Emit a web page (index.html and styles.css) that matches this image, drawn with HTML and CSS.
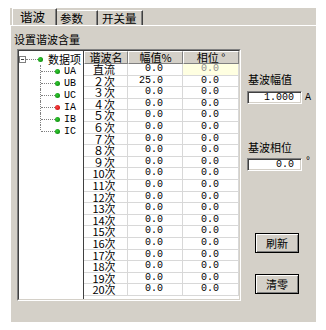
FILE: index.html
```html
<!DOCTYPE html>
<html lang="zh">
<head>
    <meta charset="UTF-8">
    <meta name="viewport" content="width=device-width, initial-scale=1.0">
    <title>谐波设置</title>
    <link rel="stylesheet" href="styles.css">
</head>
<body>
    <div class="window">
        <!-- Pestañas -->
        <div class="tabs">
            <div class="tab tab-harm active">谐波</div>
            <div class="tab tab-param">参数</div>
            <div class="tab tab-switch">开关量</div>
        </div>

        <div class="panel">
            <div class="group-title">设置谐波含量</div>

            <div class="content">
                <div class="frame">
                    <div class="frame-inner">
                        <!-- Árbol de datos -->
                        <div class="tree">
                            <div class="node root">
                                <span class="expander"></span>
                                <span class="hline short"></span>
                                <span class="dot"></span>
                                <span class="node-label">数据项</span>
                            </div>
                            <div class="children">
                                <div class="node leaf"><span class="hline"></span><span class="dot"></span><span class="node-label latin">UA</span></div>
                                <div class="node leaf"><span class="hline"></span><span class="dot"></span><span class="node-label latin">UB</span></div>
                                <div class="node leaf"><span class="hline"></span><span class="dot"></span><span class="node-label latin">UC</span></div>
                                <div class="node leaf"><span class="hline"></span><span class="dot red"></span><span class="node-label latin">IA</span></div>
                                <div class="node leaf"><span class="hline"></span><span class="dot"></span><span class="node-label latin">IB</span></div>
                                <div class="node leaf"><span class="hline"></span><span class="dot"></span><span class="node-label latin">IC</span></div>
                            </div>
                        </div>

                        <!-- Tabla de armónicos -->
                        <div class="grid">
                            <div class="grid-head">
                                <div class="th">谐波名</div>
                                <div class="th">幅值%</div>
                                <div class="th">相位 °</div>
                            </div>
                            <div class="row"><div class="td name">直流</div><div class="td num">0.0</div><div class="td num current">0.0</div></div>
                            <div class="row"><div class="td name">２次</div><div class="td num">25.0</div><div class="td num">0.0</div></div>
                            <div class="row"><div class="td name">３次</div><div class="td num">0.0</div><div class="td num">0.0</div></div>
                            <div class="row"><div class="td name">４次</div><div class="td num">0.0</div><div class="td num">0.0</div></div>
                            <div class="row"><div class="td name">５次</div><div class="td num">0.0</div><div class="td num">0.0</div></div>
                            <div class="row"><div class="td name">６次</div><div class="td num">0.0</div><div class="td num">0.0</div></div>
                            <div class="row"><div class="td name">７次</div><div class="td num">0.0</div><div class="td num">0.0</div></div>
                            <div class="row"><div class="td name">８次</div><div class="td num">0.0</div><div class="td num">0.0</div></div>
                            <div class="row"><div class="td name">９次</div><div class="td num">0.0</div><div class="td num">0.0</div></div>
                            <div class="row"><div class="td name">10次</div><div class="td num">0.0</div><div class="td num">0.0</div></div>
                            <div class="row"><div class="td name">11次</div><div class="td num">0.0</div><div class="td num">0.0</div></div>
                            <div class="row"><div class="td name">12次</div><div class="td num">0.0</div><div class="td num">0.0</div></div>
                            <div class="row"><div class="td name">13次</div><div class="td num">0.0</div><div class="td num">0.0</div></div>
                            <div class="row"><div class="td name">14次</div><div class="td num">0.0</div><div class="td num">0.0</div></div>
                            <div class="row"><div class="td name">15次</div><div class="td num">0.0</div><div class="td num">0.0</div></div>
                            <div class="row"><div class="td name">16次</div><div class="td num">0.0</div><div class="td num">0.0</div></div>
                            <div class="row"><div class="td name">17次</div><div class="td num">0.0</div><div class="td num">0.0</div></div>
                            <div class="row"><div class="td name">18次</div><div class="td num">0.0</div><div class="td num">0.0</div></div>
                            <div class="row"><div class="td name">19次</div><div class="td num">0.0</div><div class="td num">0.0</div></div>
                            <div class="row"><div class="td name">20次</div><div class="td num">0.0</div><div class="td num">0.0</div></div>
                        </div>
                    </div>
                </div>

                <!-- Panel lateral -->
                <div class="side">
                    <div class="field-label label-amp">基波幅值</div>
                    <div class="field-row row-amp">
                        <input class="field" type="text" value="1.000">
                        <span class="unit">A</span>
                    </div>
                    <div class="field-label label-phase">基波相位</div>
                    <div class="field-row row-phase">
                        <input class="field" type="text" value="0.0">
                        <span class="unit degree">°</span>
                    </div>
                    <button class="btn btn-refresh">刷新</button>
                    <button class="btn btn-clear">清零</button>
                </div>
            </div>
        </div>
    </div>
</body>
</html>
```

FILE: styles.css
```css
:root {
    --face: #d4d0c8;
    --shadow: #808080;
    --dark: #404040;
    --grid-line: #d8d8d8;
}
* {
    box-sizing: border-box;
}
body {
    margin: 0;
    background: #fff;
    font-family: "Noto Sans CJK SC", sans-serif;
    font-size: 11px;
    color: #000;
}
.window {
    margin: 8px 0 0 10px;
    width: 306px;
    height: 314px;
    background: var(--face);
    display: flex;
    flex-direction: column;
}

/* Pestañas */
.tabs {
    display: flex;
    align-items: flex-end;
    height: 17px;
    padding-left: 2px;
}
.tab {
    height: 15px;
    line-height: 14px;
    font-size: 11.5px;
    border-top: 1px solid #fff;
    border-right: 1px solid var(--dark);
    box-shadow: inset -1px 0 var(--shadow);
}
.tab.active {
    height: 17px;
    border-left: 1px solid #fff;
    line-height: 15px;
    font-size: 12.5px;
}
.tab-harm {
    width: 45px;
    padding-left: 7px;
}
.tab-param {
    width: 41px;
    padding-left: 3px;
}
.tab-switch {
    width: 45px;
    padding-left: 4px;
}

.panel {
    flex: 1;
    border-top: 1px solid #fff;
    border-left: 1px solid #fff;
    padding: 7px 0 0 3px;
}
.group-title {
    line-height: 13px;
    height: 13px;
}
.content {
    display: flex;
    gap: 6px;
    margin: 3px 0 0 3px;
}

/* Marco hundido */
.frame {
    width: 224px;
    height: 252px;
    border: 1px solid;
    border-color: var(--shadow) #fff #fff var(--shadow);
}
.frame-inner {
    height: 100%;
    display: flex;
    border: 1px solid;
    border-color: var(--dark) var(--face) var(--face) var(--dark);
    background: #fff;
}

/* Árbol */
.tree {
    width: 65px;
    border-right: 1px solid var(--dark);
    padding-top: 2px;
}
.node {
    display: flex;
    align-items: center;
    height: 12px;
}
.expander {
    width: 7px;
    height: 7px;
    border: 1px solid var(--shadow);
    background: linear-gradient(#404040, #404040) center / 3px 1px no-repeat, #fff;
}
.hline {
    width: 14px;
    border-top: 1px dotted var(--shadow);
}
.hline.short {
    width: 12px;
}
.dot {
    width: 5px;
    height: 5px;
    border-radius: 50%;
    background: radial-gradient(circle at 40% 40%, #3c3, #070);
}
.dot.red {
    background: radial-gradient(circle at 40% 40%, #f44, #b00);
}
.node-label {
    margin-left: 5px;
    white-space: nowrap;
}
.node-label.latin {
    margin-left: 4px;
    font-family: "Liberation Mono", monospace;
    font-size: 10px;
}
.children {
    margin-left: 21px;
}
.leaf {
    border-left: 1px dotted var(--shadow);
}
.leaf:last-child {
    border-left: none;
    padding-left: 1px;
    background: repeating-linear-gradient(to bottom, var(--shadow) 0 1px, transparent 1px 2px) 0 0 / 1px 6px no-repeat;
}

/* Tabla */
.grid {
    width: 155px;
}
.grid-head,
.row {
    display: grid;
    grid-template-columns: 44px 55px 56px;
}
.th {
    height: 13px;
    line-height: 11px;
    text-align: center;
    background: var(--face);
    border-top: 1px solid #fff;
    border-left: 1px solid #fff;
    border-right: 1px solid var(--shadow);
    border-bottom: 1px solid var(--shadow);
}
.td {
    height: 11.6px;
    line-height: 10.6px;
    border-right: 1px solid var(--grid-line);
    border-bottom: 1px solid var(--grid-line);
}
.td.name {
    text-align: center;
    padding-right: 3px;
}
.td.num {
    text-align: right;
    padding-right: 19px;
    font-family: "Liberation Mono", monospace;
    font-size: 10px;
}
.td.current {
    background: #ffffe1;
    color: #909090;
}

/* Panel lateral */
.side {
    display: flex;
    flex-direction: column;
    align-items: flex-start;
}
.field-label {
    line-height: 13px;
    height: 13px;
    margin-left: 1px;
}
.label-amp {
    margin-top: 24px;
}
.label-phase {
    margin-top: 37px;
}
.field-row {
    display: flex;
    align-items: center;
    gap: 3px;
}
.row-amp {
    margin-top: 5px;
}
.row-phase {
    margin-top: 4px;
}
.field {
    width: 55px;
    height: 13px;
    padding: 0 7px 0 0;
    border: 1px solid;
    border-color: var(--shadow) #fff #fff var(--shadow);
    box-shadow: inset 1px 1px var(--dark), inset -1px -1px var(--face);
    background: #fff;
    font-family: "Liberation Mono", monospace;
    font-size: 10px;
    text-align: right;
    outline: none;
}
.unit {
    font-family: "Liberation Mono", monospace;
    font-size: 10px;
}
.unit.degree {
    align-self: flex-start;
    line-height: 8px;
}
.btn {
    width: 44px;
    height: 20px;
    margin-left: 8px;
    padding: 0;
    border: 1px solid #000;
    box-shadow: inset 1px 1px #fff, inset -1px -1px var(--shadow);
    background: var(--face);
    font-family: "Noto Sans CJK SC", sans-serif;
    font-size: 11px;
    color: #000;
}
.btn-refresh {
    margin-top: 62px;
}
.btn-clear {
    margin-top: 21px;
}
```
